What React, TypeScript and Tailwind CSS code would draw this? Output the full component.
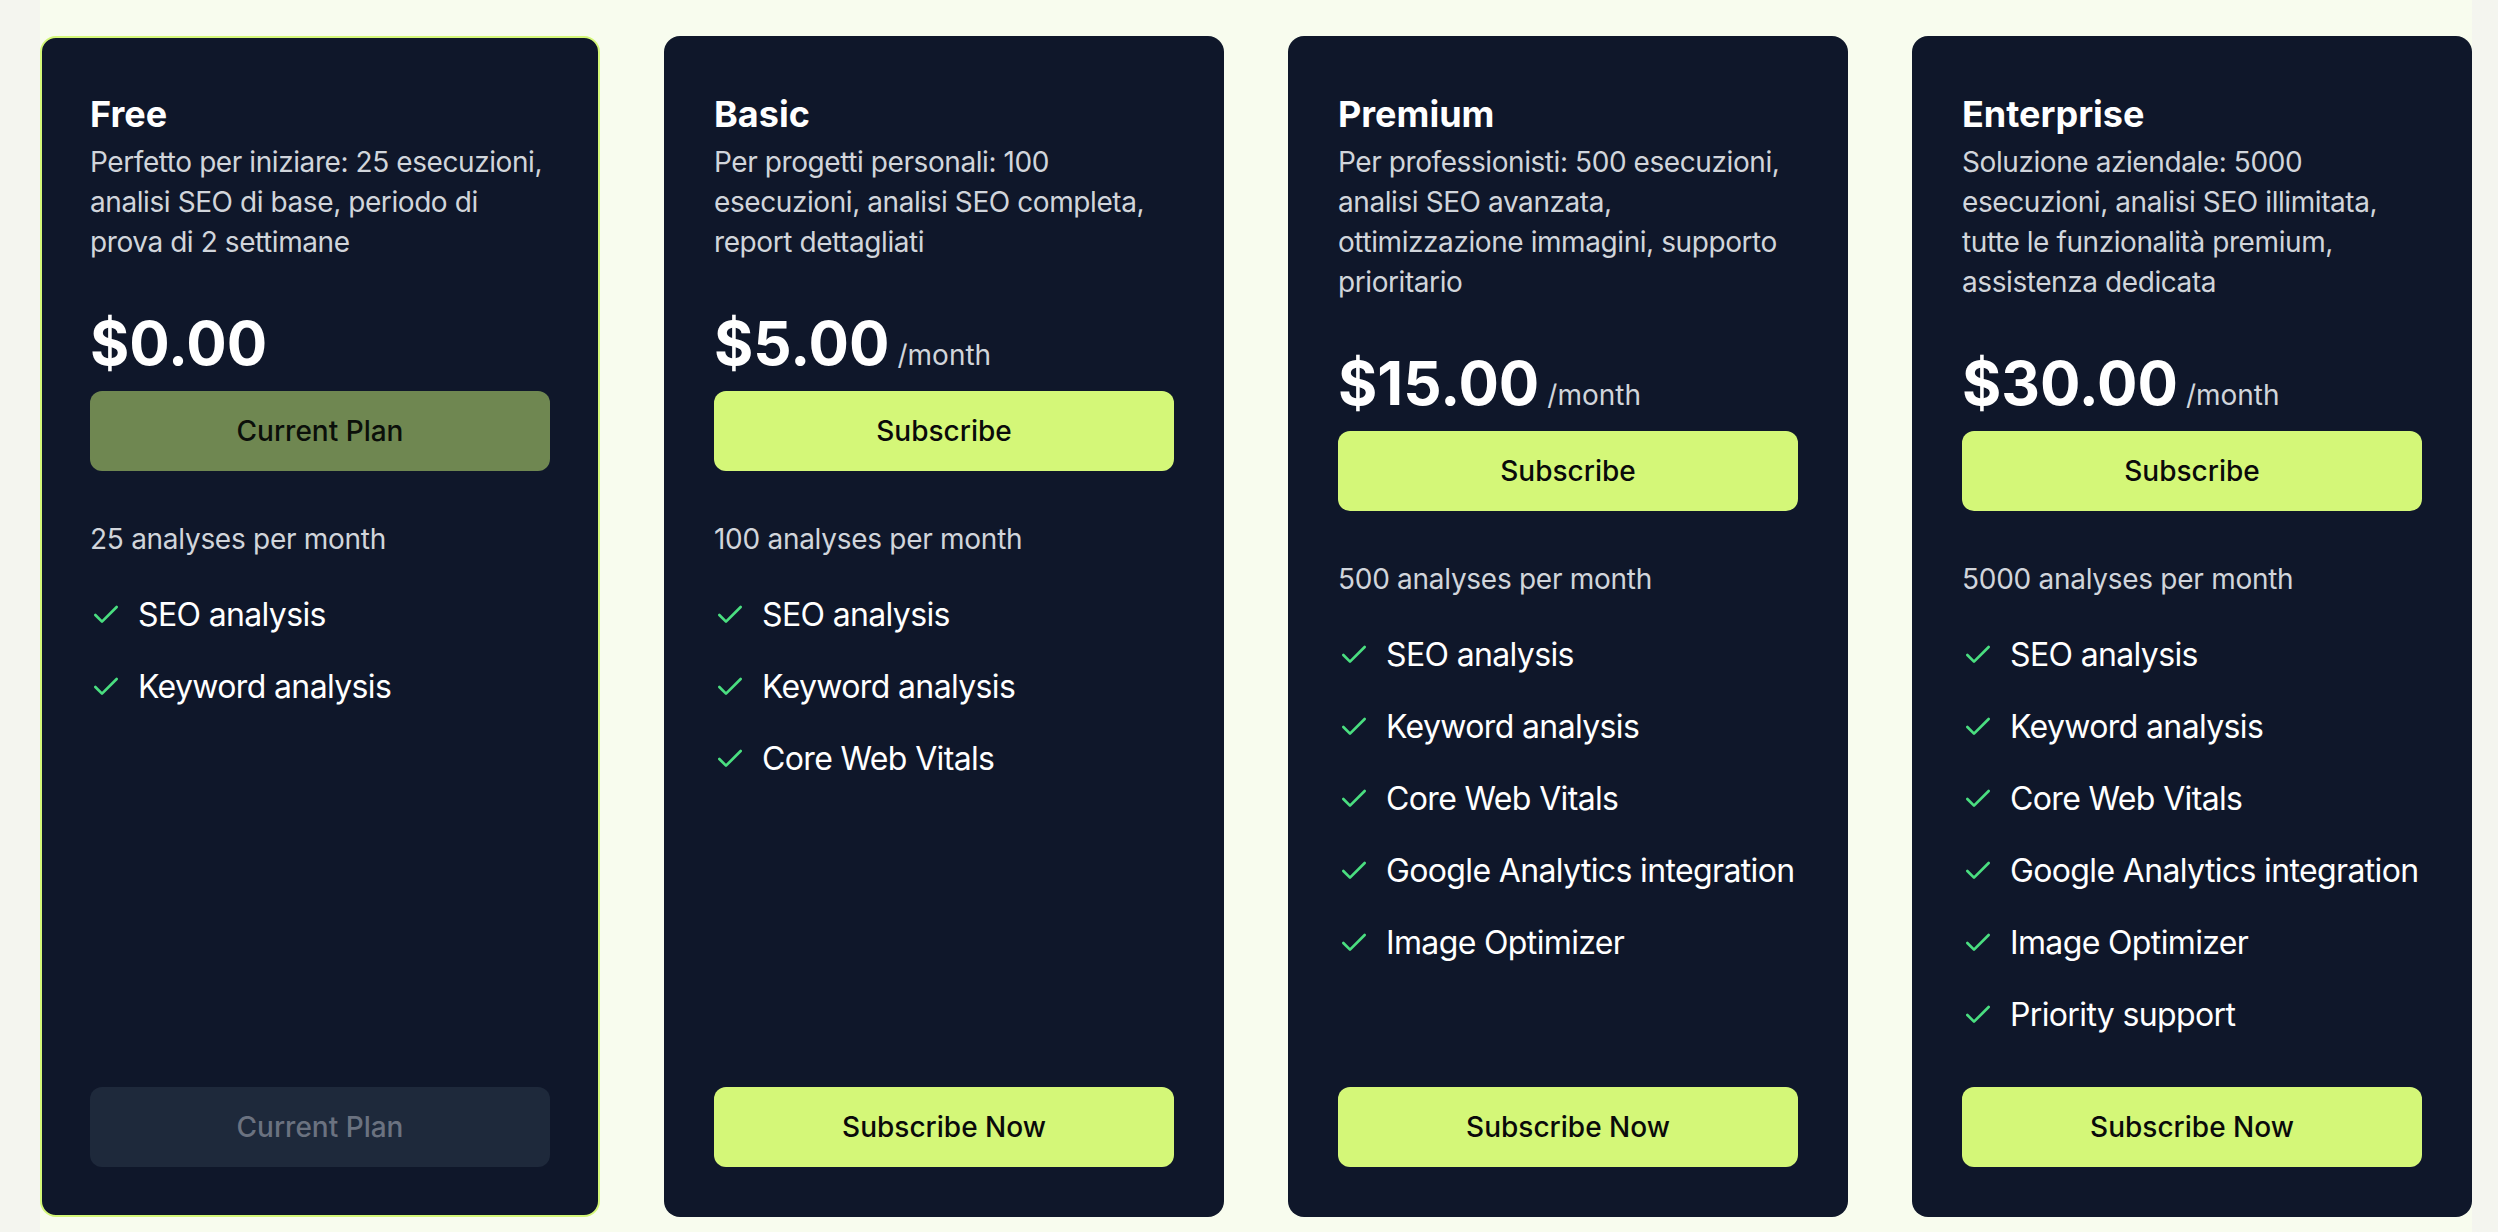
import React from 'react';
import { Check } from 'lucide-react';

type Plan = {
  name: string;
  description: string;
  price: string;
  perMonth: boolean;
  analyses: string;
  features: string[];
  current?: boolean;
};

const plans: Plan[] = [
  {
    name: 'Free',
    description: 'Perfetto per iniziare: 25 esecuzioni, analisi SEO di base, periodo di prova di 2 settimane',
    price: '$0.00',
    perMonth: false,
    analyses: '25 analyses per month',
    features: ['SEO analysis', 'Keyword analysis'],
    current: true,
  },
  {
    name: 'Basic',
    description: 'Per progetti personali: 100 esecuzioni, analisi SEO completa, report dettagliati',
    price: '$5.00',
    perMonth: true,
    analyses: '100 analyses per month',
    features: ['SEO analysis', 'Keyword analysis', 'Core Web Vitals'],
  },
  {
    name: 'Premium',
    description: 'Per professionisti: 500 esecuzioni, analisi SEO avanzata, ottimizzazione immagini, supporto prioritario',
    price: '$15.00',
    perMonth: true,
    analyses: '500 analyses per month',
    features: ['SEO analysis', 'Keyword analysis', 'Core Web Vitals', 'Google Analytics integration', 'Image Optimizer'],
  },
  {
    name: 'Enterprise',
    description: 'Soluzione aziendale: 5000 esecuzioni, analisi SEO illimitata, tutte le funzionalità premium, assistenza dedicata',
    price: '$30.00',
    perMonth: true,
    analyses: '5000 analyses per month',
    features: [
      'SEO analysis',
      'Keyword analysis',
      'Core Web Vitals',
      'Google Analytics integration',
      'Image Optimizer',
      'Priority support',
    ],
  },
];

const PlanCard: React.FC<{ plan: Plan }> = ({ plan }) => {
  return (
    <div
      className={`flex flex-col rounded-[16px] border-2 bg-[#0f172a] p-12 ${
        plan.current ? 'border-[#d4f778]' : 'border-transparent'
      }`}
    >
      <h3 className="text-[36px] leading-[56px] font-bold text-white">{plan.name}</h3>
      <p className="text-[28px] leading-[40px] tracking-[-0.015em] text-[#d1d5db]">{plan.description}</p>

      <div className="mt-[45px] flex items-baseline">
        <span className="text-[60px] leading-[72px] font-bold text-white">{plan.price}</span>
        {plan.perMonth && <span className="ml-[8px] text-[28px] text-[#d1d5db]">/month</span>}
      </div>

      {plan.current ? (
        <button className="mt-3 h-[80px] w-full rounded-[12px] bg-[#6f8751] text-[28px] font-medium text-[#0b0f0a]">
          Current Plan
        </button>
      ) : (
        <button className="mt-3 h-[80px] w-full rounded-[12px] bg-[#d4f778] text-[28px] font-medium text-[#0a0a0a]">
          Subscribe
        </button>
      )}

      <p className="mt-12 text-[28px] leading-[40px] tracking-[-0.01em] text-[#d1d5db]">{plan.analyses}</p>

      <ul className="mt-8 flex flex-col gap-6">
        {plan.features.map((f) => (
          <li
            key={f}
            className="flex h-[48px] items-center gap-4 whitespace-nowrap text-[32px] tracking-[-0.02em] text-white"
          >
            <Check className="h-8 w-8 shrink-0 text-[#4ade80]" strokeWidth={2} />
            <span>{f}</span>
          </li>
        ))}
      </ul>

      <div className="mt-auto pt-12">
        {plan.current ? (
          <button className="h-[80px] w-full rounded-[12px] bg-[#1e293b] text-[28px] font-medium text-[#6b7280]">
            Current Plan
          </button>
        ) : (
          <button className="h-[80px] w-full rounded-[12px] bg-[#d4f778] text-[28px] font-medium text-[#0a0a0a]">
            Subscribe Now
          </button>
        )}
      </div>
    </div>
  );
};

const App: React.FC = () => {
  return (
    <div className="min-h-screen bg-[#f4f5ef]" style={{ fontFamily: 'Inter, "Noto Sans", sans-serif' }}>
      <div className="ml-[40px] min-h-screen w-[2432px] bg-[#f8fcee] pt-[36px]">
        <div className="grid grid-cols-4 gap-16">
          {plans.map((p) => (
            <PlanCard key={p.name} plan={p} />
          ))}
        </div>
      </div>
    </div>
  );
};

export default App;
